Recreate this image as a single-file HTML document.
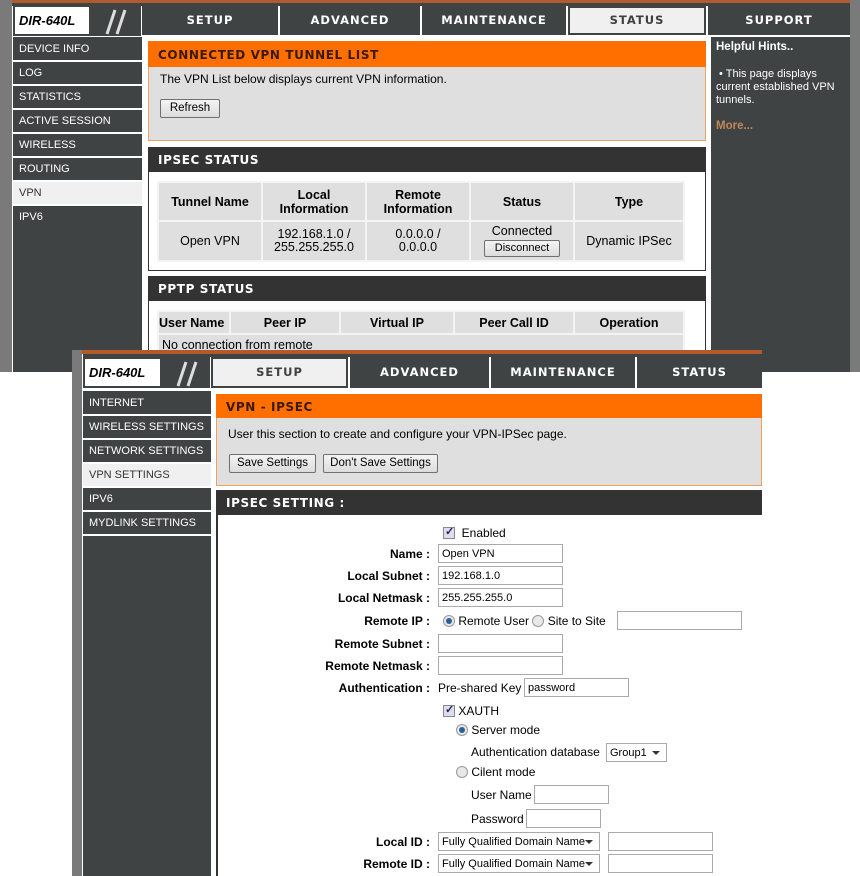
<!DOCTYPE html>
<html><head><meta charset="utf-8"><style>
*{margin:0;padding:0;box-sizing:border-box}
body{width:860px;height:876px;position:relative;overflow:hidden;background:#fff;font-family:"Liberation Sans",sans-serif;font-size:12px;color:#000}
.a{position:absolute}
.dk{background:#404343}
.tab{position:absolute;background:#404343;color:#fff;font:bold 11.5px "DejaVu Sans",sans-serif;letter-spacing:1px;text-align:center}
.tab.on{background:#f0f0f0;color:#404040;border:2px solid #404343}
.logo{position:absolute;background:#fff;border:2px solid #404343}
.logo i{position:absolute;left:4px;top:6px;font:italic bold 13px "Liberation Sans",sans-serif;color:#000}
.logo b{position:absolute;right:0;top:0;bottom:0;background:#404343}
.side{position:absolute;color:#fff;font-size:11px;padding-left:6px;border-bottom:2px solid #fff;background:#404343;line-height:22px}
.side.on{background:#f0f0f0;color:#333}
.oh{position:absolute;background:#ff6f00;color:#3a1a00;font:bold 12px "DejaVu Sans",sans-serif;letter-spacing:.6px;padding-left:10px}
.dh{position:absolute;background:#333;color:#fff;font:bold 12px "DejaVu Sans",sans-serif;letter-spacing:.6px;padding-left:10px}
.btn{position:absolute;background:linear-gradient(#f4f4f4,#dcdcdc);border:1px solid #707070;border-radius:2px;font-size:11.5px;text-align:center}
table{border-collapse:separate;border-spacing:2px}
td{background:#dfdfdf;text-align:center;font-size:12.5px}
th{background:#dfdfdf;font-weight:bold;font-size:12.5px}
.in{position:absolute;border:1px solid #aaa;background:#fff;height:19px;font-size:11px;padding:2px 3px 0;line-height:14px}
.cb{display:inline-block;width:12px;height:12px;border:1px solid #888;background:#dde;vertical-align:-2px;position:relative}
.cb:after{content:"✓";position:absolute;left:1px;top:-3px;font-size:11px;color:#226;font-weight:bold}
.rd{display:inline-block;width:12px;height:12px;border-radius:50%;border:1px solid #999;background:#e8e8e8;vertical-align:-2px;position:relative}
.rd.on:after{content:"";position:absolute;left:2px;top:2px;width:6px;height:6px;border-radius:50%;background:#2a5f9e}
.t{position:absolute;white-space:nowrap;font-size:12px}
.sel{position:absolute;border:1px solid #aaa;background:#fff;height:19px;font-size:11px;padding:2px 3px 0;line-height:14px}
.sel:after{content:"";position:absolute;right:6px;top:7px;border:4px solid transparent;border-top-color:#333}
</style></head><body>

<!-- TOP SCREENSHOT -->
<div class="a" style="left:0;top:0;width:860px;height:372px;background:#fff"></div>
<div class="a" style="left:0;top:0;width:12px;height:372px;background:#7a7a7a"></div>
<div class="a" style="left:850px;top:0;width:10px;height:372px;background:#7a7a7a"></div>
<div class="a" style="left:12px;top:0;width:838px;height:3px;background:#b05a2e"></div>
<div class="a dk" style="left:12px;top:3px;width:838px;height:3px"></div>
<div class="a" style="left:12px;top:6px;width:838px;height:31px;background:#fff"></div>
<div class="logo" style="left:13px;top:5px;width:128px;height:31px"><i>DIR-640L</i><b style="width:50px"></b>
<svg class="a" style="left:78px;top:1px" width="40" height="28"><path d="M14 26 L22 2 M24 26 L32 2" stroke="#ddd" stroke-width="3"/></svg></div>
<div class="tab" style="left:142px;top:6px;width:136px;height:29px;line-height:29px">SETUP</div>
<div class="tab" style="left:280px;top:6px;width:140px;height:29px;line-height:29px">ADVANCED</div>
<div class="tab" style="left:422px;top:6px;width:144px;height:29px;line-height:29px">MAINTENANCE</div>
<div class="tab on" style="left:568px;top:6px;width:138px;height:29px;line-height:25px">STATUS</div>
<div class="tab" style="left:708px;top:6px;width:142px;height:29px;line-height:29px">SUPPORT</div>
<div class="a dk" style="left:13px;top:37px;width:129px;height:335px"></div>
<div class="side" style="left:13px;top:38px;width:129px;height:24px">DEVICE INFO</div>
<div class="side" style="left:13px;top:62px;width:129px;height:24px">LOG</div>
<div class="side" style="left:13px;top:86px;width:129px;height:24px">STATISTICS</div>
<div class="side" style="left:13px;top:110px;width:129px;height:24px">ACTIVE SESSION</div>
<div class="side" style="left:13px;top:134px;width:129px;height:24px">WIRELESS</div>
<div class="side" style="left:13px;top:158px;width:129px;height:24px">ROUTING</div>
<div class="side on" style="left:13px;top:182px;width:129px;height:24px">VPN</div>
<div class="side" style="left:13px;top:206px;width:129px;height:24px;border-bottom:none">IPV6</div>
<div class="a dk" style="left:711px;top:37px;width:139px;height:335px"></div>
<div class="t" style="left:716px;top:41px;color:#fff;font-weight:bold;font-size:11.5px">Helpful Hints..</div>
<div class="t" style="left:716px;top:68px;color:#fff;font-size:11px;line-height:13px;white-space:normal;width:130px">&nbsp;• This page displays current established VPN tunnels.</div>
<div class="t" style="left:716px;top:120px;color:#c08858;font-weight:bold;font-size:11.5px">More...</div>

<div class="a" style="left:148px;top:41px;width:558px;height:100px;background:#dfdfdf;border:1px solid #f0a060"></div>
<div class="oh" style="left:148px;top:41px;width:558px;height:26px;line-height:28px">CONNECTED VPN TUNNEL LIST</div>
<div class="t" style="left:160px;top:72px;font-size:12px">The VPN List below displays current VPN information.</div>
<div class="btn" style="left:160px;top:99px;width:60px;height:19px;line-height:17px">Refresh</div>

<div class="a" style="left:148px;top:147px;width:558px;height:124px;background:#fff;border:1px solid #333"></div>
<div class="dh" style="left:148px;top:147px;width:558px;height:25px;line-height:27px">IPSEC STATUS</div>
<table class="a" style="left:157px;top:181px;width:528px;background:#f4f4f4">
<tr style="height:37px"><th style="width:102px">Tunnel Name</th><th style="width:102px">Local<br>Information</th><th style="width:102px">Remote<br>Information</th><th style="width:102px">Status</th><th>Type</th></tr>
<tr style="height:38px"><td>Open VPN</td><td style="line-height:13px">192.168.1.0 /<br>255.255.255.0</td><td style="line-height:13px">0.0.0.0 /<br>0.0.0.0</td><td style="line-height:13px">Connected<br><span style="display:inline-block;border:1px solid #707070;background:linear-gradient(#f4f4f4,#dcdcdc);border-radius:2px;font-size:11px;padding:1px 10px;margin-top:2px">Disconnect</span></td><td>Dynamic IPSec</td></tr>
</table>
<div class="a" style="left:148px;top:276px;width:558px;height:96px;background:#fff;border:1px solid #333"></div>
<div class="dh" style="left:148px;top:276px;width:558px;height:25px;line-height:27px">PPTP STATUS</div>
<table class="a" style="left:157px;top:310px;width:528px;background:#f4f4f4">
<tr style="height:21px"><th style="width:70px;text-align:left">User Name</th><th style="width:108px">Peer IP</th><th style="width:112px">Virtual IP</th><th style="width:118px">Peer Call ID</th><th>Operation</th></tr>
<tr style="height:20px"><td colspan="5" style="text-align:left;padding-left:3px">No connection from remote</td></tr>
</table>

<!-- BOTTOM SCREENSHOT -->
<div class="a" style="left:72px;top:350px;width:690px;height:526px;background:#fff"></div>
<div class="a" style="left:72px;top:350px;width:10px;height:526px;background:#7a7a7a"></div>
<div class="a" style="left:82px;top:350px;width:680px;height:4px;background:#b05a2e"></div>
<div class="a dk" style="left:83px;top:354px;width:679px;height:3px"></div>
<div class="logo" style="left:83px;top:357px;width:127px;height:31px"><i>DIR-640L</i><b style="width:48px"></b>
<svg class="a" style="left:79px;top:1px" width="40" height="28"><path d="M14 26 L22 2 M24 26 L32 2" stroke="#ddd" stroke-width="3"/></svg></div>
<div class="tab on" style="left:211px;top:357px;width:137px;height:31px;line-height:27px">SETUP</div>
<div class="tab" style="left:350px;top:357px;width:139px;height:31px;line-height:31px">ADVANCED</div>
<div class="tab" style="left:491px;top:357px;width:144px;height:31px;line-height:31px">MAINTENANCE</div>
<div class="tab" style="left:637px;top:357px;width:125px;height:31px;line-height:31px">STATUS</div>
<div class="a dk" style="left:83px;top:391px;width:128px;height:485px"></div>
<div class="side" style="left:83px;top:392px;width:128px;height:24px">INTERNET</div>
<div class="side" style="left:83px;top:416px;width:128px;height:24px">WIRELESS SETTINGS</div>
<div class="side" style="left:83px;top:440px;width:128px;height:24px">NETWORK SETTINGS</div>
<div class="side on" style="left:83px;top:464px;width:128px;height:24px">VPN SETTINGS</div>
<div class="side" style="left:83px;top:488px;width:128px;height:24px">IPV6</div>
<div class="side" style="left:83px;top:512px;width:128px;height:24px">MYDLINK SETTINGS</div>

<div class="a" style="left:216px;top:394px;width:546px;height:92px;background:#dfdfdf;border:1px solid #f0a060"></div>
<div class="oh" style="left:216px;top:394px;width:546px;height:24px;line-height:26px">VPN - IPSEC</div>
<div class="t" style="left:228px;top:427px;font-size:12px">User this section to create and configure your VPN-IPSec page.</div>
<div class="btn" style="left:229px;top:454px;width:87px;height:19px;line-height:17px">Save Settings</div>
<div class="btn" style="left:323px;top:454px;width:115px;height:19px;line-height:17px">Don't Save Settings</div>

<div class="a" style="left:216px;top:490px;width:546px;height:386px;background:#fff;border-left:2px solid #333"></div>
<div class="dh" style="left:216px;top:490px;width:546px;height:25px;line-height:27px">IPSEC SETTING :</div>

<div class="t" style="left:443px;top:526px"><span class="cb"></span>&nbsp; Enabled</div>
<div class="t" style="left:300px;top:547px;width:130px;text-align:right;font-weight:bold">Name :</div>
<div class="in" style="left:438px;top:544px;width:125px">Open VPN</div>
<div class="t" style="left:300px;top:569px;width:130px;text-align:right;font-weight:bold">Local Subnet :</div>
<div class="in" style="left:438px;top:566px;width:125px">192.168.1.0</div>
<div class="t" style="left:300px;top:591px;width:130px;text-align:right;font-weight:bold">Local Netmask :</div>
<div class="in" style="left:438px;top:588px;width:125px">255.255.255.0</div>
<div class="t" style="left:300px;top:614px;width:130px;text-align:right;font-weight:bold">Remote IP :</div>
<div class="t" style="left:443px;top:614px"><span class="rd on"></span> Remote User <span class="rd"></span> Site to Site</div>
<div class="in" style="left:617px;top:611px;width:125px"></div>
<div class="t" style="left:300px;top:637px;width:130px;text-align:right;font-weight:bold">Remote Subnet :</div>
<div class="in" style="left:438px;top:634px;width:125px"></div>
<div class="t" style="left:300px;top:659px;width:130px;text-align:right;font-weight:bold">Remote Netmask :</div>
<div class="in" style="left:438px;top:656px;width:125px"></div>
<div class="t" style="left:300px;top:681px;width:130px;text-align:right;font-weight:bold">Authentication :</div>
<div class="t" style="left:438px;top:681px">Pre-shared Key</div>
<div class="in" style="left:524px;top:678px;width:105px">password</div>
<div class="t" style="left:443px;top:704px"><span class="cb"></span> XAUTH</div>
<div class="t" style="left:456px;top:723px"><span class="rd on"></span> Server mode</div>
<div class="t" style="left:471px;top:745px">Authentication database</div>
<div class="sel" style="left:606px;top:743px;width:61px">Group1</div>
<div class="t" style="left:456px;top:765px"><span class="rd"></span> Cilent mode</div>
<div class="t" style="left:471px;top:788px">User Name</div>
<div class="in" style="left:534px;top:785px;width:75px"></div>
<div class="t" style="left:471px;top:812px">Password</div>
<div class="in" style="left:526px;top:809px;width:75px"></div>
<div class="t" style="left:300px;top:835px;width:130px;text-align:right;font-weight:bold">Local ID :</div>
<div class="sel" style="left:438px;top:832px;width:162px">Fully Qualified Domain Name</div>
<div class="in" style="left:608px;top:832px;width:105px"></div>
<div class="t" style="left:300px;top:857px;width:130px;text-align:right;font-weight:bold">Remote ID :</div>
<div class="sel" style="left:438px;top:854px;width:162px">Fully Qualified Domain Name</div>
<div class="in" style="left:608px;top:854px;width:105px"></div>
</body></html>
